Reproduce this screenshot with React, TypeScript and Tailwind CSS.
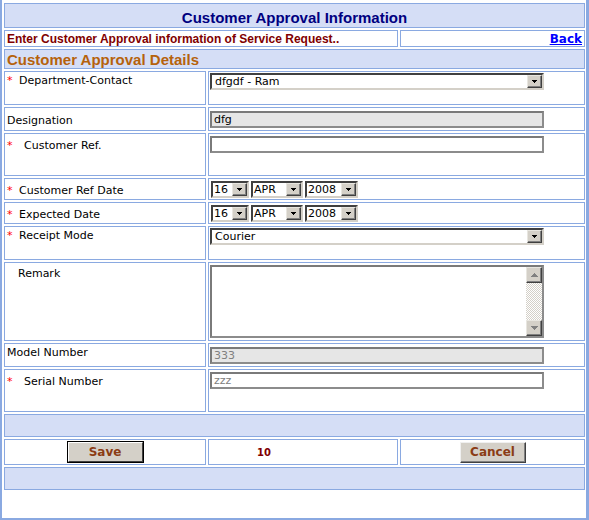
import type { ReactNode } from 'react';

// small black / grey triangle used in the select and scroll buttons
const Arrow = ({ up, gray, big }: { up?: boolean; gray?: boolean; big?: boolean }) => {
  const w = big ? 7 : 5;
  const h = big ? 4 : 3;
  return (
    <svg width={w} height={h} viewBox={`0 0 ${w} ${h}`} shapeRendering="crispEdges">
      <polygon points={up ? `${w / 2},0 ${w},${h} 0,${h}` : `0,0 ${w},0 ${w / 2},${h}`} fill={gray ? '#808080' : '#000000'} />
    </svg>
  );
};

const DropBtn = () => (
  <div className="w-[15px] shrink-0 flex items-center justify-center bg-[#d4d0c8] border border-t-[#e8e6e0] border-l-[#e8e6e0] border-r-[#404040] border-b-[#404040] shadow-[inset_-1px_-1px_0_#808080]">
    <Arrow />
  </div>
);

const Select = ({ text, width, pad }: { text: string; width: string; pad: string }) => (
  <div className={`${width} h-[17px] flex bg-white border-2 border-t-[#404040] border-l-[#404040] border-r-[#d4d0c8] border-b-[#d4d0c8]`}>
    <span className={`flex-1 truncate leading-[14px] ${pad}`}>{text}</span>
    <DropBtn />
  </div>
);

const Input = ({ value, disabled, gray }: { value?: string; disabled?: boolean; gray?: boolean }) => (
  <div
    className={`w-[334px] h-[17px] border-2 border-t-[#7a7a7a] border-l-[#7a7a7a] border-r-[#8c8c8c] border-b-[#8c8c8c] pl-[2px] leading-[13px] ${
      disabled ? 'bg-[#e6e6e6]' : 'bg-white'
    } ${gray ? 'text-[#808080]' : 'text-black'}`}
  >
    {value}
  </div>
);

const ScrollBtn = ({ up }: { up?: boolean }) => (
  <div className="h-[16px] flex items-center justify-center bg-[#d4d0c8] border border-t-[#e8e6e0] border-l-[#e8e6e0] border-r-[#404040] border-b-[#404040] shadow-[inset_-1px_-1px_0_#808080]">
    <Arrow up={up} gray big />
  </div>
);

const Label = ({ text, req, gap }: { text: string; req?: boolean; gap: string }) => (
  <span>
    <span className={`inline-block ${gap} text-[#ff0000]`}>{req ? '*' : ''}</span>
    {text}
  </span>
);

const Row = ({ h, label, pt, right, children }: { h: string; label: ReactNode; pt: string; right: string; children: ReactNode }) => (
  <div className={`flex gap-[2px] ${h}`}>
    <div className={`w-[202px] shrink-0 border border-[#8aa9e1] pl-[2px] ${pt}`}>{label}</div>
    <div className={`flex-1 border border-[#8aa9e1] ${right}`}>{children}</div>
  </div>
);

export default function App() {
  return (
    <div className="w-[589px] h-[520px] bg-white border-l-2 border-r-[3px] border-b-2 border-[#8aa9e1] pl-[2px] pr-px pt-[3px] flex flex-col gap-[2px] font-['DejaVu_Sans',sans-serif] text-[11px] leading-[13px] text-black">
      {/* titulo */}
      <div className="h-[25px] shrink-0 border border-[#8aa9e1] bg-[#d5def6] flex items-center justify-center pt-[3px]">
        <span className="font-['Liberation_Sans',sans-serif] font-bold text-[15px] leading-[17px] text-[#000080]">
          Customer Approval Information
        </span>
      </div>

      <div className="h-[17px] shrink-0 flex gap-[2px]">
        <div className="w-[394px] shrink-0 border border-[#8aa9e1] pl-[2px] flex items-center">
          <span className="font-['Liberation_Sans',sans-serif] font-bold text-[12px] leading-[14px] text-[#800000]">
            Enter Customer Approval information of Service Request..
          </span>
        </div>
        <div className="flex-1 border border-[#8aa9e1] pr-[2px] flex items-center justify-end">
          <a href="#" className="font-['DejaVu_Sans',sans-serif] font-bold text-[12px] leading-[14px] text-[#0000ff] underline">
            Back
          </a>
        </div>
      </div>

      <div className="h-[20px] shrink-0 border border-[#8aa9e1] bg-[#d5def6] pl-[2px] flex items-center pt-px">
        <span className="font-['Liberation_Sans',sans-serif] font-bold text-[15px] leading-[17px] text-[#b5620c]">
          Customer Approval Details
        </span>
      </div>

      <Row h="h-[34px]" pt="pt-[2px]" right="pl-px pt-px" label={<Label req gap="w-[12px]" text="Department-Contact" />}>
        <Select text="dfgdf - Ram" width="w-[334px]" pad="pl-[3px]" />
      </Row>

      <Row h="h-[24px]" pt="pt-[6px]" right="pl-px flex items-center" label={<Label gap="w-0" text="Designation" />}>
        <Input value="dfg" disabled />
      </Row>

      <Row h="h-[43px]" pt="pt-[5px]" right="pl-px pt-[2px]" label={<Label req gap="w-[17px]" text="Customer Ref." />}>
        <Input />
      </Row>

      <Row h="h-[22px]" pt="pt-[5px]" right="pl-[2px] flex items-center gap-[2px]" label={<Label req gap="w-[12px]" text="Customer Ref Date" />}>
        <Select text="16" width="w-[38px]" pad="pl-px" />
        <Select text="APR" width="w-[52px]" pad="pl-px" />
        <Select text="2008" width="w-[53px]" pad="pl-px" />
      </Row>

      <Row h="h-[22px]" pt="pt-[5px]" right="pl-[2px] flex items-center gap-[2px]" label={<Label req gap="w-[12px]" text="Expected Date" />}>
        <Select text="16" width="w-[38px]" pad="pl-px" />
        <Select text="APR" width="w-[52px]" pad="pl-px" />
        <Select text="2008" width="w-[53px]" pad="pl-px" />
      </Row>

      <Row h="h-[34px]" pt="pt-[2px]" right="pl-px pt-px" label={<Label req gap="w-[12px]" text="Receipt Mode" />}>
        <Select text="Courier" width="w-[334px]" pad="pl-[3px]" />
      </Row>

      <Row h="h-[79px]" pt="pt-[4px]" right="pl-px pt-[2px]" label={<Label gap="w-[11px]" text="Remark" />}>
        <div className="w-[334px] h-[73px] flex bg-white border-2 border-t-[#7a7a7a] border-l-[#7a7a7a] border-r-[#8c8c8c] border-b-[#8c8c8c]">
          <div className="flex-1" />
          <div className="w-[16px] flex flex-col">
            <ScrollBtn up />
            <div className="flex-1 bg-[repeating-conic-gradient(#d4d0c8_0_25%,#ffffff_0_50%)] bg-[length:2px_2px]" />
            <ScrollBtn />
          </div>
        </div>
      </Row>

      <Row h="h-[24px]" pt="pt-[2px]" right="pl-px flex items-center" label={<Label gap="w-0" text="Model Number" />}>
        <Input value="333" disabled gray />
      </Row>

      <Row h="h-[43px]" pt="pt-[5px]" right="pl-px pt-[2px]" label={<Label req gap="w-[17px]" text="Serial Number" />}>
        <Input value="zzz" gray />
      </Row>

      <div className="h-[23px] shrink-0 border border-[#8aa9e1] bg-[#d5def6]" />

      {/* botones */}
      <div className="h-[26px] shrink-0 flex gap-[2px]">
        <div className="w-[202px] shrink-0 border border-[#8aa9e1] flex items-center justify-center">
          <button type="button" className="w-[77px] h-[22px] border border-black p-0 bg-[#d4d0c8]">
            <span className="h-full flex items-center justify-center border border-t-white border-l-white border-r-[#404040] border-b-[#404040] font-['DejaVu_Sans',sans-serif] font-bold text-[12px] text-[#8b3c14]">
              Save
            </span>
          </button>
        </div>
        <div className="w-[190px] shrink-0 border border-[#8aa9e1] pl-[48px] flex items-center">
          <span className="font-['DejaVu_Sans',sans-serif] font-bold text-[10px] text-[#800000]">10</span>
        </div>
        <div className="flex-1 border border-[#8aa9e1] flex items-center justify-center">
          <button
            type="button"
            className="w-[66px] h-[21px] flex items-center justify-center bg-[#d4d0c8] border border-t-[#f0f0f0] border-l-[#f0f0f0] border-r-[#404040] border-b-[#404040] shadow-[inset_-1px_-1px_0_#808080] font-['DejaVu_Sans',sans-serif] font-bold text-[12px] text-[#8b3c14]"
          >
            Cancel
          </button>
        </div>
      </div>

      <div className="h-[23px] shrink-0 border border-[#8aa9e1] bg-[#d5def6]" />
    </div>
  );
}
